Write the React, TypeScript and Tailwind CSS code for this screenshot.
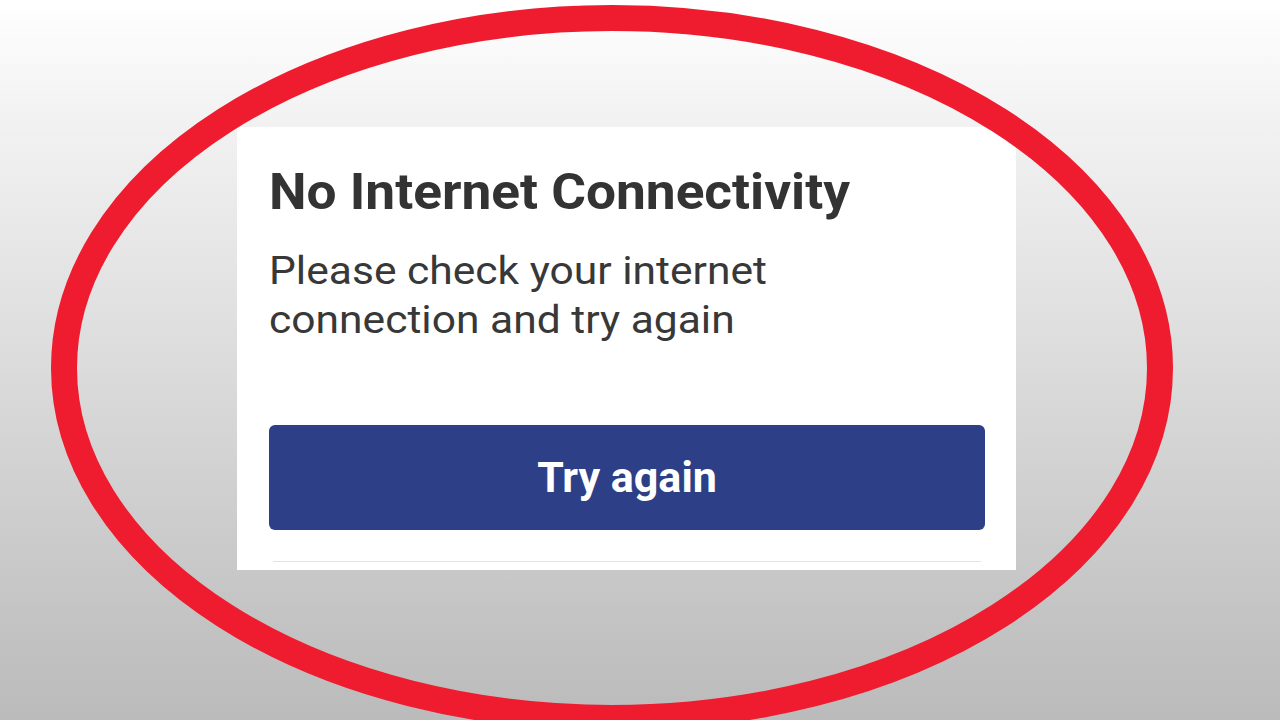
import React from "react";

export default function App() {
  return (
    <div className="relative h-[720px] w-[1280px] overflow-hidden bg-[linear-gradient(to_bottom,#ffffff_0%,#f3f3f3_15%,#dcdcdc_50%,#c4c4c4_85%,#bbbbbb_100%)] font-['Roboto',sans-serif]">
      <div className="pl-[237px] pt-[127px]">
        <div className="flex h-[443px] w-[779px] flex-col bg-white pl-[32px] pr-[31px] pt-[40px]">
          <h1 className="origin-left scale-x-[1.064] text-[50px] font-bold leading-[50px] text-[#333333]">
            No Internet Connectivity
          </h1>
          <p className="mt-[30px] origin-left scale-x-[1.12] text-[38px] leading-[49px] text-[#383838]">
            Please check your internet
            <br />
            connection and try again
          </p>
          <button className="mt-[80px] flex h-[105px] w-full items-center justify-center rounded-[6px] bg-[#2c3f87] text-[43px] font-bold text-white">
            Try again
          </button>
          <div className="mx-[4px] mt-[31px] h-px bg-[#e3e3e3]" />
        </div>
      </div>
      <svg
        className="pointer-events-none absolute left-0 top-0"
        width="1280"
        height="720"
        viewBox="0 0 1280 720"
      >
        <ellipse cx="612" cy="368" rx="548" ry="350" fill="none" stroke="#ee1c2e" strokeWidth="26" />
      </svg>
    </div>
  );
}
